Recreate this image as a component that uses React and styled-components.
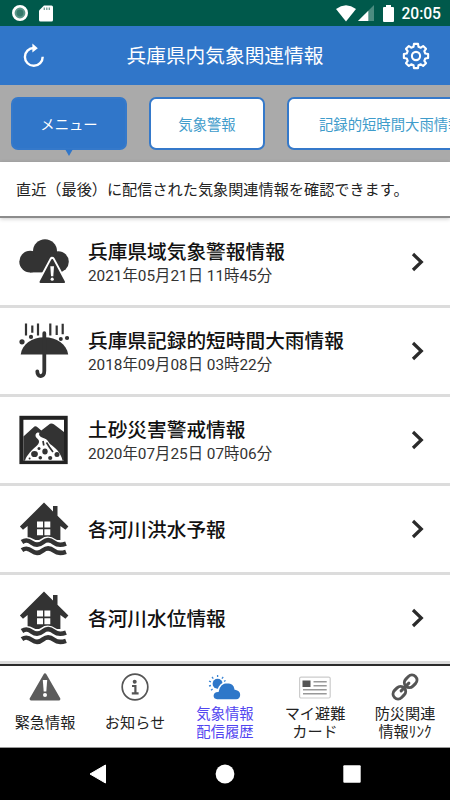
import React, { useState } from 'react'
import styled, { createGlobalStyle, css } from 'styled-components'

const GlobalStyle = createGlobalStyle`
  * {
    box-sizing: border-box;
  }
  body {
    margin: 0;
    background: #fff;
    font-family: Roboto, 'Noto Sans CJK JP', sans-serif;
  }
  button {
    font-family: inherit;
    padding: 0;
    border: 0;
    background: none;
  }
  svg {
    display: block;
    flex: none;
  }
`

// outline of the gear, eight teeth round a centre of 14,14
const gearPoints = () => {
  const pts = []
  for (let i = 0; i < 8; i++) {
    const shape = [[-15, 9.6], [-9.5, 12.3], [9.5, 12.3], [15, 9.6]]
    shape.forEach(([deg, r]) => {
      const a = ((i * 45 + deg) * Math.PI) / 180
      pts.push(`${(14 + r * Math.sin(a)).toFixed(2)},${(14 - r * Math.cos(a)).toFixed(2)}`)
    })
  }
  return pts.join(' ')
}

const RecordIcon = () => (
  <svg width="18" height="18" viewBox="0 0 18 18">
    <circle cx="9" cy="9" r="6.7" fill="#5b978a" stroke="#fff" strokeWidth="2.6" />
    <circle cx="9" cy="9" r="3.4" fill="#35796b" />
  </svg>
)

const SdIcon = () => (
  <svg width="14" height="17" viewBox="0 0 14 17">
    <path d="M5 0.5H12.5Q14 0.5 14 2V15Q14 16.5 12.5 16.5H1.5Q0 16.5 0 15V5.5Z" fill="#fff" />
    <path d="M5.3 2.5V5M7.8 2.5V5M10.3 2.5V5" stroke="#6f9c94" strokeWidth="1.3" />
  </svg>
)

const WifiIcon = () => (
  <svg width="20" height="17" viewBox="0 0 20 17">
    <path d="M0 4Q10-3.4 20 4L10 16.5Z" fill="#fff" />
  </svg>
)

const SignalIcon = () => (
  <svg width="16" height="16" viewBox="0 0 16 16">
    <path d="M0 16L16 0V16Z" fill="#4b8c80" />
    <path d="M0 16L10.3 5.7V16Z" fill="#fff" />
  </svg>
)

const BatteryIcon = () => (
  <svg width="11" height="17" viewBox="0 0 11 17">
    <path d="M3 0H8V2H10Q11 2 11 3V16Q11 17 10 17H1Q0 17 0 16V3Q0 2 1 2H3Z" fill="#fff" />
  </svg>
)

const RefreshIcon = () => (
  <svg width="28" height="28" viewBox="0 0 28 28" fill="none">
    <path d="M22.7 14.8A8.9 8.9 0 1 1 13.8 6" stroke="#fff" strokeWidth="2.4" />
    <path d="M12.4 1.6L17.8 6.2L12.4 10.6Z" fill="#fff" />
  </svg>
)

const GearIcon = () => (
  <svg width="28" height="28" viewBox="0 0 28 28" fill="none" stroke="#fff" strokeWidth="2.1" strokeLinejoin="round">
    <polygon points={gearPoints()} />
    <circle cx="14" cy="14" r="4.1" />
  </svg>
)

const CloudAlertIcon = () => (
  <svg width="50" height="56" viewBox="0 0 50 56" fill="#333">
    <circle cx="11.2" cy="27.6" r="10.9" />
    <circle cx="26" cy="17.2" r="12" />
    <circle cx="39.2" cy="27.8" r="10.6" />
    <path d="M11 22H39V38.4H11Z" />
    <path d="M33.2 25.3L45.6 48.2H20.9Z" stroke="#fff" strokeWidth="5" strokeLinejoin="round" fill="#fff" />
    <path d="M33.2 26L45 48H21.5Z" stroke="#333" strokeWidth="2" strokeLinejoin="round" />
    <path d="M31.3 32.2H35L34.3 42.3H32Z" fill="#fff" />
    <circle cx="33.2" cy="45.2" r="1.6" fill="#fff" />
  </svg>
)

const UmbrellaIcon = () => (
  <svg width="50" height="56" viewBox="0 0 50 56" fill="#333">
    <path d="M1.7 31.4C3 21 13 14.2 25.3 14.2S47.7 21 49.2 31.4Z" />
    <path d="M25.3 10.2V47.8C25.3 54.7 18.3 54.7 18.3 48.5" stroke="#333" strokeWidth="3.8" strokeLinecap="round" fill="none" />
    <g stroke="#333" strokeWidth="2.2">
      <path d="M7 0.6V12.6M19 0.6V12.6M31.3 0.6V12.6" />
      <path d="M13.3 2.6V9.8M37.7 2.6V12M43.7 0.8V11.2" />
    </g>
    <circle cx="3" cy="18.8" r="2.6" />
    <circle cx="12" cy="13.9" r="2.1" />
    <circle cx="41.8" cy="15.9" r="2" />
    <circle cx="48" cy="15" r="2.1" />
  </svg>
)

const LandslideIcon = () => (
  <svg width="50" height="56" viewBox="0 0 50 56">
    <rect x="0.4" y="3.8" width="48.3" height="48.3" fill="#222" />
    <rect x="4.4" y="7.8" width="40.6" height="40.6" fill="#fff" />
    <path d="M4.4 24.4L15.4 14.6Q16.8 13.9 18.5 15.2L22.3 18.5L31 11.8Q32.8 10.9 34.8 12.2L45 20V48.4H4.4Z" fill="#333" />
    <path
      d="M18.5 20.6C16.2 21.6 15.8 24.5 18 26.2C21 28.6 20.6 31.4 17.5 34C13 37.5 8 43 6 48.4H43.5C42.5 42 36.5 35.5 31 32C29.5 30 28.4 27.5 25 26.3C21.5 25 19 23.5 20.5 20.8Z"
      fill="#fff"
    />
    <g fill="#333">
      <ellipse cx="15.5" cy="42" rx="3.4" ry="3.1" />
      <ellipse cx="26" cy="39.5" rx="2.7" ry="3" />
      <circle cx="38" cy="42.5" r="2.5" />
      <circle cx="21.3" cy="45.8" r="1.8" />
      <circle cx="31.2" cy="46" r="2.1" />
      <circle cx="20" cy="36.5" r="1.5" />
      <circle cx="10.6" cy="46.4" r="1" />
    </g>
    <path d="M24 29L24.8 33.5M27.5 30.5L30.5 35.3L34 40" stroke="#333" strokeWidth="1.7" fill="none" />
  </svg>
)

const FloodIcon = () => (
  <svg width="50" height="56" viewBox="0 0 50 56" fill="#333">
    <path d="M25 1.6L34 10.4V5H38.5V14.8L49.4 25.6L46.4 28.7L41.4 25V39H8.6V25L4 28.7L0.9 25.6Z" />
    <path d="M18 20.4H24V26.5H18ZM25.4 20.4H31.3V26.5H25.4ZM18 28.3H24V34.2H18ZM25.4 28.3H31.3V34.2H25.4Z" fill="#fff" />
    <g fill="none">
      <path d="M3 41C7 38.3 9.5 39.2 13 41.3S20 43.6 24 40.8S31.5 39 35 41.3S42 44 47 42" stroke="#fff" strokeWidth="7" />
      <path d="M3 41C7 38.3 9.5 39.2 13 41.8S20 44.4 24 41.2S31.5 38.8 35 41.6S42 44.4 47 42.6" stroke="#333" strokeWidth="4.6" />
      <path d="M3 49.2C7 46.5 9.5 47.4 13 50S20 52.6 24 49.4S31.5 47 35 49.8S42 52.6 47 50.8" stroke="#333" strokeWidth="4.6" />
    </g>
  </svg>
)

const ChevronIcon = () => (
  <svg width="14" height="20" viewBox="0 0 14 20" fill="none">
    <path d="M2 2L10.3 10L2 18" stroke="#2a2a2a" strokeWidth="3.2" />
  </svg>
)

const WarningIcon = () => (
  <svg width="34" height="30" viewBox="0 0 34 30">
    <path d="M17 2.6L31 27H3Z" fill="#5c5c5c" stroke="#5c5c5c" strokeWidth="2.8" strokeLinejoin="round" />
    <path d="M14.8 8H19.2L18.3 19.4H15.7Z" fill="#fff" />
    <circle cx="17" cy="23" r="2" fill="#fff" />
  </svg>
)

const InfoIcon = () => (
  <svg width="34" height="30" viewBox="0 0 34 30" fill="none" stroke="#555">
    <circle cx="17" cy="15" r="12.8" strokeWidth="1.7" />
    <circle cx="16.7" cy="9.7" r="2" fill="#555" stroke="none" />
    <path d="M14 14H17.4V21.4M13.8 21.4H20.6" strokeWidth="2.2" />
  </svg>
)

const WeatherIcon = () => (
  <svg width="34" height="30" viewBox="0 0 34 30" fill="#2e77c9">
    <circle cx="9.6" cy="11.8" r="5" />
    <g stroke="#3c86d4" strokeWidth="1.3">
      <path d="M9.6 3V5M4 5L5.3 6.6M1 9.2L3 9.8M1 14L3 13.5M15.2 5L13.9 6.6M17.6 8.5L16 9.4M3 18.3L4.6 17" />
    </g>
    <path
      d="M9 28Q4.8 27.6 4.8 23.8Q5 19.5 10 19.2Q11.6 10.6 19.4 10.5Q26.2 10.6 27.2 17Q33 18 33 23Q32.6 27.6 28.4 28Z"
      stroke="#fff"
      strokeWidth="1.6"
    />
  </svg>
)

const CardIcon = () => (
  <svg width="34" height="30" viewBox="0 0 34 30">
    <rect x="1.6" y="5.1" width="30.6" height="20.9" rx="1.5" fill="#fff" stroke="#ccc" strokeWidth="1.2" />
    <rect x="4.5" y="8.5" width="8" height="6.5" fill="#555" />
    <path d="M15.5 9.7H28.7M15.5 13.8H28.7M5 17.8H28.7M5 21.8H28.7" stroke="#999" strokeWidth="1.4" />
  </svg>
)

const LinkIcon = () => (
  <svg width="34" height="30" viewBox="0 0 34 30" fill="none" stroke="#555" strokeWidth="3">
    <g transform="rotate(-45 17 15)">
      <rect x="2.2" y="10" width="13.6" height="10" rx="5" />
      <rect x="18.2" y="10" width="13.6" height="10" rx="5" />
      <path d="M11.5 15H22.5" strokeLinecap="round" />
    </g>
  </svg>
)

const tabs = [
  { label: 'メニュー' },
  { label: '気象警報' },
  { label: '記録的短時間大雨情報', wide: true },
]

const rows = [
  { title: '兵庫県域気象警報情報', date: '2021年05月21日 11時45分', Icon: CloudAlertIcon },
  { title: '兵庫県記録的短時間大雨情報', date: '2018年09月08日 03時22分', Icon: UmbrellaIcon },
  { title: '土砂災害警戒情報', date: '2020年07月25日 07時06分', Icon: LandslideIcon },
  { title: '各河川洪水予報', Icon: FloodIcon },
  { title: '各河川水位情報', Icon: FloodIcon },
]

const navItems = [
  { lines: ['緊急情報'], Icon: WarningIcon },
  { lines: ['お知らせ'], Icon: InfoIcon },
  { lines: ['気象情報', '配信履歴'], Icon: WeatherIcon },
  { lines: ['マイ避難', 'カード'], Icon: CardIcon },
  { lines: ['防災関連', '情報ﾘﾝｸ'], Icon: LinkIcon },
]

const App = () => {
  const [tab, setTab] = useState(0)
  const [page, setPage] = useState(2)

  return (
    <>
      <GlobalStyle />
      <Screen>
        <StatusBar>
          <RecordIcon />
          <SdIcon />
          <StatusRight>
            <WifiIcon />
            <SignalIcon />
            <BatteryIcon />
            <Clock>20:05</Clock>
          </StatusRight>
        </StatusBar>
        <Header>
          <RefreshIcon />
          <HeaderTitle>兵庫県内気象関連情報</HeaderTitle>
          <GearIcon />
        </Header>
        <TabBar>
          {tabs.map(({ label, wide }, i) => (
            <Tab key={label} $active={tab === i} $wide={wide} onClick={() => setTab(i)}>
              {label}
            </Tab>
          ))}
        </TabBar>
        <Notice>直近（最後）に配信された気象関連情報を確認できます。</Notice>
        <List>
          {rows.map(({ title, date, Icon }) => (
            <Row key={title}>
              <Icon />
              <RowText>
                <RowTitle>{title}</RowTitle>
                {date && <RowDate>{date}</RowDate>}
              </RowText>
              <ChevronIcon />
            </Row>
          ))}
        </List>
        <BottomNav>
          {navItems.map(({ lines, Icon }, i) => (
            <NavItem key={lines[0]} onClick={() => setPage(i)}>
              <Icon />
              <NavLabel $active={page === i}>
                {lines.map((line) => (
                  <span key={line}>{line}</span>
                ))}
              </NavLabel>
            </NavItem>
          ))}
        </BottomNav>
        <SystemBar>
          <svg width="18" height="20" viewBox="0 0 18 20">
            <path d="M16.5 1V19L1 10Z" fill="#fff" stroke="#fff" strokeLinejoin="round" />
          </svg>
          <svg width="20" height="20" viewBox="0 0 20 20">
            <circle cx="10" cy="10" r="9.4" fill="#fff" />
          </svg>
          <svg width="18" height="18" viewBox="0 0 18 18">
            <rect x="0.3" y="0.3" width="17.4" height="17.4" rx="1" fill="#fff" />
          </svg>
        </SystemBar>
      </Screen>
    </>
  )
}

const Screen = styled.div`
  display: flex;
  flex-direction: column;
  width: 450px;
  height: 800px;
  overflow: hidden;
  background: #fff;
`

const StatusBar = styled.div`
  display: flex;
  align-items: center;
  gap: 10px;
  height: 26px;
  flex: none;
  padding: 0 9px 0 11px;
  background: #00594b;
`

const StatusRight = styled.div`
  display: flex;
  align-items: center;
  margin-left: auto;

  svg + svg {
    margin-left: 2px;
  }
  svg:nth-child(3) {
    margin-left: 9px;
  }
`

const Clock = styled.span`
  margin-left: 7px;
  padding-top: 1px;
  color: #fff;
  font-size: 15.6px;
  font-weight: 500;
  line-height: 20px;
`

const Header = styled.header`
  display: flex;
  align-items: center;
  justify-content: space-between;
  height: 59px;
  flex: none;
  padding: 0 20px;
  background: #3076c9;
`

const HeaderTitle = styled.h1`
  margin: 0;
  padding-top: 3px;
  color: #fff;
  font-size: 19.7px;
  font-weight: 400;
  line-height: 28px;
`

const TabBar = styled.div`
  display: flex;
  gap: 22px;
  height: 77px;
  flex: none;
  padding: 12px 0 0 11px;
  overflow: hidden;
  background: #aaa;
`

const Tab = styled.button`
  position: relative;
  flex: none;
  min-width: 116px;
  height: 53px;
  padding: 0 ${({ $wide }) => ($wide ? '30px' : '0')};
  border: 2px solid #3579ca;
  border-radius: 7px;
  background: #fff;
  color: #3f9ccb;
  font-size: 14.35px;
  white-space: nowrap;

  ${({ $active }) =>
    $active &&
    css`
      background: #3076c9;
      color: #fff;

      &::after {
        content: '';
        position: absolute;
        left: 52px;
        top: 50px;
        border: 4px solid transparent;
        border-top: 7px solid #3076c9;
        border-bottom: 0;
      }
    `}
`

const Notice = styled.p`
  height: 56px;
  flex: none;
  margin: 0;
  padding: 1px 0 0 16px;
  border-bottom: 2px solid #8c8c8c;
  box-shadow: 0 1px 4px rgba(0, 0, 0, 0.2);
  color: #222;
  font-size: 15.17px;
  line-height: 54px;
  white-space: nowrap;
`

const List = styled.div`
  display: flex;
  flex-direction: column;
  flex: none;
  padding-top: 1px;
`

const Row = styled.div`
  display: flex;
  align-items: center;
  height: 89px;
  padding: 0 25px 0 19px;
  border-bottom: 3px solid #dcdcdc;
`

const RowText = styled.div`
  flex: 1;
  margin-left: 19px;
  padding-top: 3px;
  white-space: nowrap;
`

const RowTitle = styled.div`
  color: #111;
  font-size: 19.7px;
  font-weight: 500;
  line-height: 26px;
`

const RowDate = styled.div`
  color: #333;
  font-size: 15.35px;
  line-height: 21px;
`

const BottomNav = styled.nav`
  display: grid;
  grid-template-columns: repeat(5, 1fr);
  height: 84px;
  flex: none;
  border-top: 2px solid #2c2c2c;
  border-bottom: 1px solid #999;
`

const NavItem = styled.button`
  display: flex;
  flex-direction: column;
  align-items: center;
  padding-top: 6px;
`

const NavLabel = styled.span`
  display: flex;
  flex: 1;
  flex-direction: column;
  align-items: center;
  justify-content: center;
  padding-bottom: 2px;
  color: ${({ $active }) => ($active ? '#5145f0' : '#222')};
  font-size: ${({ $active }) => ($active ? '14.35px' : '15.2px')};
  line-height: 17.6px;
`

const SystemBar = styled.div`
  display: flex;
  align-items: center;
  justify-content: space-between;
  flex: 1;
  padding: 0 89px;
  background: #000;
`

export default App
